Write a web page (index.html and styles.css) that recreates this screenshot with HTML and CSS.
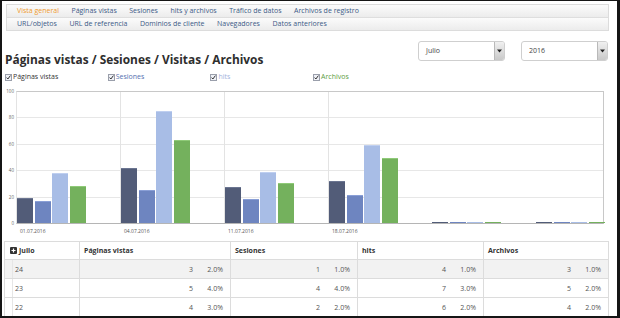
FILE: index.html
```html
<!DOCTYPE html>
<html lang="es">
<head>
<meta charset="utf-8">
<title>Estadísticas</title>
<link rel="stylesheet" href="styles.css">
</head>
<body>
<div class="frame">
  <div class="nav">
    <div class="nav-row">
      <span class="nav-item active">Vista general</span>
      <span class="nav-item">Páginas vistas</span>
      <span class="nav-item">Sesiones</span>
      <span class="nav-item">hits y archivos</span>
      <span class="nav-item">Tráfico de datos</span>
      <span class="nav-item">Archivos de registro</span>
    </div>
    <div class="nav-row">
      <span class="nav-item">URL/objetos</span>
      <span class="nav-item">URL de referencia</span>
      <span class="nav-item">Dominios de cliente</span>
      <span class="nav-item">Navegadores</span>
      <span class="nav-item">Datos anteriores</span>
    </div>
  </div>

  <div class="header">
    <h1 class="title">Páginas vistas / Sesiones / Visitas / Archivos</h1>
    <div class="selects">
      <div class="select"><span class="select-text">Julio</span><span class="select-arrow"><svg width="5" height="4" viewBox="0 0 5 4"><path d="M0 0.5h5L2.5 3.5z" fill="#222"/></svg></span></div>
      <div class="select"><span class="select-text">2016</span><span class="select-arrow"><svg width="5" height="4" viewBox="0 0 5 4"><path d="M0 0.5h5L2.5 3.5z" fill="#222"/></svg></span></div>
    </div>
  </div>

  <div class="legend">
    <label class="legend-item"><svg class="cb" width="7" height="7" viewBox="0 0 7 7"><rect x="0.5" y="0.5" width="6" height="6" fill="#eef0f6" stroke="#9a9fab"/><path d="M1.6 3.6l1.3 1.4 2.5-3.4" fill="none" stroke="#333" stroke-width="1"/></svg><span class="lg-dark">Páginas vistas</span></label>
    <label class="legend-item"><svg class="cb" width="7" height="7" viewBox="0 0 7 7"><rect x="0.5" y="0.5" width="6" height="6" fill="#eef0f6" stroke="#9a9fab"/><path d="M1.6 3.6l1.3 1.4 2.5-3.4" fill="none" stroke="#333" stroke-width="1"/></svg><span class="lg-mid">Sesiones</span></label>
    <label class="legend-item"><svg class="cb" width="7" height="7" viewBox="0 0 7 7"><rect x="0.5" y="0.5" width="6" height="6" fill="#eef0f6" stroke="#9a9fab"/><path d="M1.6 3.6l1.3 1.4 2.5-3.4" fill="none" stroke="#333" stroke-width="1"/></svg><span class="lg-light">hits</span></label>
    <label class="legend-item"><svg class="cb" width="7" height="7" viewBox="0 0 7 7"><rect x="0.5" y="0.5" width="6" height="6" fill="#eef0f6" stroke="#9a9fab"/><path d="M1.6 3.6l1.3 1.4 2.5-3.4" fill="none" stroke="#333" stroke-width="1"/></svg><span class="lg-green">Archivos</span></label>
  </div>

  <div class="chart">
    <div class="y-axis">
      <span>100</span><span>80</span><span>60</span><span>40</span><span>20</span><span>0</span>
    </div>
    <div class="plot">
      <div class="slot">
        <div class="bar c1" style="height:25px"></div>
        <div class="bar c2" style="height:22px"></div>
        <div class="bar c3" style="height:50px"></div>
        <div class="bar c4" style="height:37px"></div>
      </div>
      <div class="slot tick">
        <div class="bar c1" style="height:55px"></div>
        <div class="bar c2" style="height:33px"></div>
        <div class="bar c3" style="height:112px"></div>
        <div class="bar c4" style="height:83px"></div>
      </div>
      <div class="slot tick">
        <div class="bar c1" style="height:36px"></div>
        <div class="bar c2" style="height:24px"></div>
        <div class="bar c3" style="height:51px"></div>
        <div class="bar c4" style="height:40px"></div>
      </div>
      <div class="slot tick">
        <div class="bar c1" style="height:42px"></div>
        <div class="bar c2" style="height:28px"></div>
        <div class="bar c3" style="height:78px"></div>
        <div class="bar c4" style="height:65px"></div>
      </div>
      <div class="slot zero">
        <div class="bar c1" style="height:1px"></div>
        <div class="bar c2" style="height:1px"></div>
        <div class="bar c3" style="height:1px"></div>
        <div class="bar c4" style="height:1px"></div>
      </div>
      <div class="slot zero last">
        <div class="bar c1" style="height:1px"></div>
        <div class="bar c2" style="height:1px"></div>
        <div class="bar c3" style="height:1px"></div>
        <div class="bar c4" style="height:1px"></div>
      </div>
    </div>
  </div>
  <div class="x-axis">
    <span>01.07.2016</span><span>04.07.2016</span><span>11.07.2016</span><span>18.07.2016</span>
  </div>

  <table class="stats">
    <colgroup>
      <col class="w-exp"><col class="w-day"><col class="w-pv"><col class="w-ses"><col class="w-hits"><col class="w-arch">
    </colgroup>
    <thead>
      <tr>
        <th colspan="2"><span class="plus"><svg width="7" height="7" viewBox="0 0 7 7"><rect width="7" height="7" rx="1" fill="#333"/><path d="M3.5 1.5v4M1.5 3.5h4" stroke="#fff" stroke-width="1.2"/></svg></span>Julio</th>
        <th>Páginas vistas</th>
        <th>Sesiones</th>
        <th>hits</th>
        <th>Archivos</th>
      </tr>
    </thead>
    <tbody>
      <tr class="odd">
        <td class="exp"></td><td class="day">24</td>
        <td><div class="val"><span class="n">3</span><span class="p">2.0%</span></div></td>
        <td><div class="val"><span class="n">1</span><span class="p">1.0%</span></div></td>
        <td><div class="val"><span class="n">4</span><span class="p">1.0%</span></div></td>
        <td><div class="val"><span class="n">3</span><span class="p">1.0%</span></div></td>
      </tr>
      <tr>
        <td class="exp"></td><td class="day">23</td>
        <td><div class="val"><span class="n">5</span><span class="p">4.0%</span></div></td>
        <td><div class="val"><span class="n">4</span><span class="p">4.0%</span></div></td>
        <td><div class="val"><span class="n">7</span><span class="p">3.0%</span></div></td>
        <td><div class="val"><span class="n">5</span><span class="p">2.0%</span></div></td>
      </tr>
      <tr>
        <td class="exp"></td><td class="day">22</td>
        <td><div class="val"><span class="n">4</span><span class="p">3.0%</span></div></td>
        <td><div class="val"><span class="n">2</span><span class="p">2.0%</span></div></td>
        <td><div class="val"><span class="n">6</span><span class="p">2.0%</span></div></td>
        <td><div class="val"><span class="n">4</span><span class="p">2.0%</span></div></td>
      </tr>
    </tbody>
  </table>
</div>
</body>
</html>
```

FILE: styles.css
```css
html, body {
  margin: 0;
  padding: 0;
  background: #fff;
}
body {
  font-family: "Open Sans", "DejaVu Sans", sans-serif;
  color: #333;
}
.frame {
  width: 620px;
  height: 318px;
  box-sizing: border-box;
  border: 2px solid #151515;
  border-top-width: 1px;
  border-right-width: 3px;
  overflow: hidden;
  background: #fff;
}

/* nav */
.nav {
  margin: 3px 0 0 4px;
  width: 603px;
  box-sizing: border-box;
  border: 1px solid #dcdcdc;
}
.nav-row {
  display: flex;
  gap: 12.5px;
  height: 12px;
  padding-left: 10px;
  background: linear-gradient(#fbfbfb, #ececec);
  font-size: 7px;
  line-height: 12px;
  color: #3b5a86;
}
.nav-row + .nav-row {
  border-top: 1px solid #dedede;
}
.nav-item.active {
  color: #f09a2c;
}

/* header */
.header {
  display: flex;
  justify-content: space-between;
  margin-top: 10px;
  height: 26px;
}
.title {
  margin: 11px 0 0 3px;
  font-size: 11.9px;
  line-height: 14px;
  font-weight: 700;
  color: #2e2e2e;
  white-space: nowrap;
}
.selects {
  display: flex;
  gap: 16px;
  margin-right: 9px;
}
.select {
  display: flex;
  width: 87px;
  height: 20px;
  box-sizing: border-box;
  border: 1px solid #cfcfcf;
  border-radius: 3px;
  overflow: hidden;
  background: #fff;
}
.select-text {
  flex: 1;
  padding-left: 7px;
  font-size: 7px;
  line-height: 18px;
  color: #444;
}
.select-arrow {
  width: 9px;
  display: flex;
  align-items: center;
  justify-content: center;
  border-left: 1px solid #b9b9b9;
  background: linear-gradient(#f0f0f0, #c9c9c9);
}

/* legend */
.legend {
  display: grid;
  grid-template-columns: repeat(4, 102.7px);
  margin: 5px 0 0 3px;
  height: 10px;
  font-size: 7px;
  line-height: 10px;
}
.legend-item {
  display: flex;
  align-items: center;
  gap: 1px;
}
.cb {
  flex: none;
}
.lg-dark { color: #333; }
.lg-mid { color: #5470b0; }
.lg-light { color: #9fb3dc; }
.lg-green { color: #5e9e43; }

/* chart */
.chart {
  display: flex;
  margin-top: 9px;
}
.y-axis {
  width: 14px;
  height: 138px;
  margin-top: -3px;
  margin-bottom: -3px;
  display: flex;
  flex-direction: column;
  justify-content: space-between;
  align-items: flex-end;
  box-sizing: border-box;
  padding-right: 2px;
  font-size: 4.5px;
  line-height: 6px;
  color: #666;
}
.plot {
  width: 588px;
  height: 133px;
  box-sizing: border-box;
  border-top: 1px solid #c8c8c8;
  border-right: 1px solid #c8c8c8;
  border-left: 1px solid #e3e3e3;
  border-bottom: 1px solid #b5b5b5;
  background: repeating-linear-gradient(to bottom, transparent 0, transparent 25.4px, #e7e7e7 25.4px, #e7e7e7 26.4px);
  display: flex;
}
.slot {
  width: 104px;
  flex: none;
  display: flex;
  align-items: flex-end;
  gap: 1.7px;
  box-sizing: border-box;
}
.slot:first-child {
  width: 103px;
}
.slot.tick {
  border-left: 1px solid #e3e3e3;
}
.slot.last {
  width: 67px;
}
.bar {
  width: 16px;
  flex: none;
  box-sizing: border-box;
}
.c1 { background: #525c78; border-top: 1px solid #6b7591; }
.c2 { background: #6e85c0; border-top: 1px solid #8a9fd6; }
.c3 { background: #a8bde6; border-top: 1px solid #bfcff0; }
.c4 { background: #74b15d; border-top: 1px solid #8fca78; }
.slot.zero .bar { border-top: none; }

.x-axis {
  display: flex;
  margin: 3px 0 0 16px;
  height: 8px;
  font-size: 5px;
  line-height: 8px;
  color: #555;
}
.x-axis span {
  width: 104px;
  padding-left: 2px;
  box-sizing: border-box;
}

/* table */
.stats {
  margin: 6px 0 0 2px;
  width: 604px;
  table-layout: fixed;
  border-collapse: collapse;
  font-size: 7px;
  line-height: 9px;
  color: #555;
}
.w-exp { width: 8px; }
.w-day { width: 67px; }
.w-pv { width: 151px; }
.w-ses { width: 127px; }
.w-hits { width: 126px; }
.w-arch { width: 125px; }
.stats th, .stats td {
  border: 1px solid #dcdcdc;
  padding: 0;
}
.stats th {
  height: 17px;
  text-align: left;
  font-weight: 700;
  color: #333;
  padding-left: 4px;
  background: #fff;
}
.stats th:first-child {
  padding-left: 5px;
}
.plus {
  display: inline-block;
  vertical-align: -1px;
  margin-right: 2px;
}
.plus svg { display: block; }
.stats td {
  height: 18px;
}
.stats tr.odd td {
  background: #f2f2f2;
}
.stats td.exp {
  border-right: 1px solid #e6e6e6;
}
.stats td.day {
  border-left: none;
  padding-left: 2px;
}
.val {
  display: flex;
  justify-content: flex-end;
  padding-right: 7px;
}
.val .p {
  width: 30px;
  text-align: right;
}
```
